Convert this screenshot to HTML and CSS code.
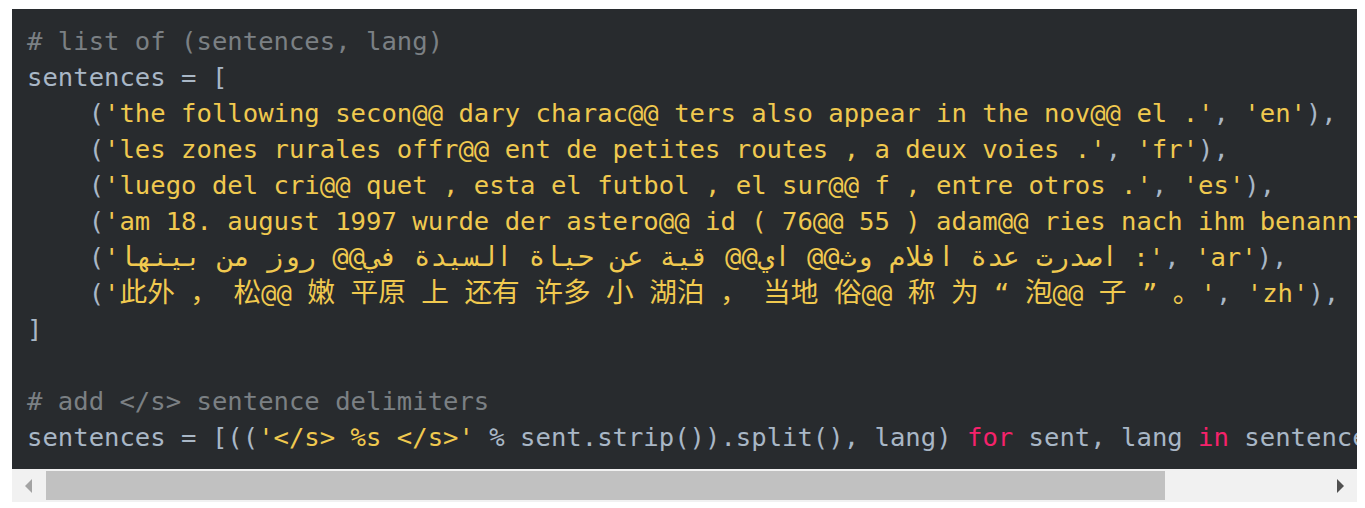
FILE: index.html
```html
<!DOCTYPE html>
<html>
<head>
<meta charset="utf-8">
<link rel="stylesheet" href="styles.css">
</head>
<body>
<div class="code-wrap">
<pre class="code"><code><span class="c"># list of (sentences, lang)</span>
sentences = [
    (<span class="s">'the following secon@@ dary charac@@ ters also appear in the nov@@ el .'</span>, <span class="s">'en'</span>),
    (<span class="s">'les zones rurales offr@@ ent de petites routes , a deux voies .'</span>, <span class="s">'fr'</span>),
    (<span class="s">'luego del cri@@ quet , esta el futbol , el sur@@ f , entre otros .'</span>, <span class="s">'es'</span>),
    (<span class="s">'am 18. august 1997 wurde der astero@@ id ( 76@@ 55 ) adam@@ ries nach ihm benannt .'</span>, <span class="s">'de'</span>),
    (<span class="s">'<span class="ar">اصدرت عدة افلام وث@@ اي@@ قية عن حياة السيدة في@@ روز من بينها</span> :'</span>, <span class="s">'ar'</span>),
    (<span class="s">'<span class="h">此外</span> <span class="h">，</span> <span class="h">松</span>@@ <span class="h">嫩</span> <span class="h">平原</span> <span class="h">上</span> <span class="h">还有</span> <span class="h">许多</span> <span class="h">小</span> <span class="h">湖泊</span> <span class="h">，</span> <span class="h">当地</span> <span class="h">俗</span>@@ <span class="h">称</span> <span class="h">为</span> “ <span class="h">泡</span>@@ <span class="h">子</span> ” <span class="h">。</span>'</span>, <span class="s">'zh'</span>),
]

<span class="c"># add &lt;/s&gt; sentence delimiters</span>
sentences = [((<span class="s">'&lt;/s&gt; %s &lt;/s&gt;'</span> % sent.strip()).split(), lang) <span class="k">for</span> sent, lang <span class="k">in</span> sentences]</code></pre>
<div class="scrollbar">
  <div class="sb-btn"><svg width="10" height="16" viewBox="0 0 10 16"><path d="M8 1 L1 8 L8 15 Z" fill="#a3a3a3"/></svg></div>
  <div class="track"><div class="thumb"></div></div>
  <div class="sb-btn"><svg width="10" height="16" viewBox="0 0 10 16"><path d="M2 1 L9 8 L2 15 Z" fill="#505050"/></svg></div>
</div>
</div>
</body>
</html>
```
FILE: styles.css
```css
html, body {
  margin: 0;
  background: #ffffff;
}
body {
  padding: 9px 8px 0 12px;
}
.code-wrap {
  width: 1345px;
}
.code {
  margin: 0;
  background: #282b2e;
  color: #a9b7c6;
  font-family: "DejaVu Sans Mono", "Noto Sans CJK SC", monospace;
  font-size: 25.6px;
  line-height: 36px;
  padding: 14px 0 14px 15px;
  white-space: pre;
  overflow: hidden;
}
.code code {
  font-family: inherit;
}
.c { color: #7b8084; }
.s { color: #f0c94f; }
.k { color: #f5226b; }
.ar {
  font-size: 27.2px;
  line-height: 20px;
}
.h {
  font-family: "Noto Sans CJK SC", sans-serif;
  font-size: 27.7px;
  line-height: 20px;
}
.scrollbar {
  display: flex;
  height: 33px;
  background: #f1f1f1;
  align-items: stretch;
}
.sb-btn {
  width: 34px;
  display: flex;
  align-items: center;
  justify-content: center;
}
.track {
  flex: 1;
  padding: 2px 0;
  display: flex;
}
.thumb {
  width: 1119px;
  background: #c1c1c1;
}
```
